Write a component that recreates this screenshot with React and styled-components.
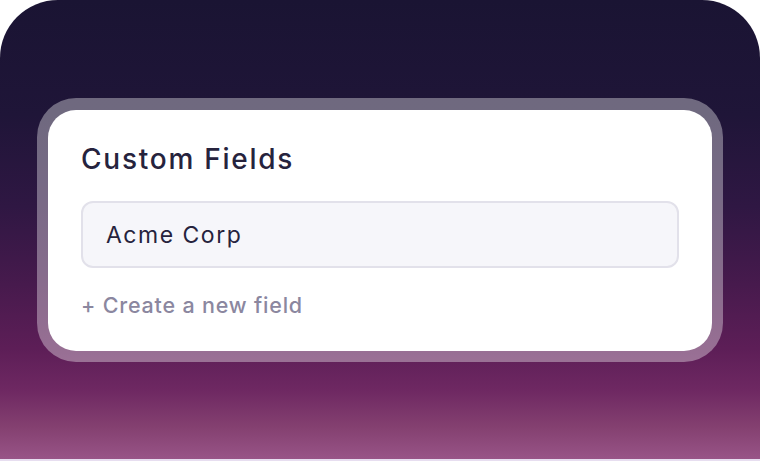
import React from "react";
import styled, { createGlobalStyle } from "styled-components";

const Global = createGlobalStyle`
  html, body { margin: 0; padding: 0; background: #ffffff; }
  body { font-family: "Inter", "Open Sans", sans-serif; }
`;

const Page = styled.div`
  width: 760px;
  height: 461px;
  display: flex;
  flex-direction: column;
  background: #e7def0;
`;

const Stage = styled.div`
  height: 459px;
  background: #ffffff;
`;

const Panel = styled.div`
  height: 100%;
  border-radius: 58px 58px 0 0;
  background: linear-gradient(
    180deg,
    #1a1433 0%,
    #1f1538 25%,
    #2f1743 45%,
    #471a4d 62%,
    #5d1e57 76%,
    #6e2862 85%,
    #844070 93%,
    #985487 100%
  );
  padding: 98px 37px 0 37px;
  box-sizing: border-box;
`;

const Ring = styled.div`
  padding: 12px 11px 11px 11px;
  border-radius: 39px;
  background: rgba(255, 255, 255, 0.36);
`;

const Card = styled.div`
  background: #ffffff;
  border-radius: 28px;
  padding: 31px 33px 32px 33px;
  display: flex;
  flex-direction: column;
`;

const Title = styled.h2`
  margin: 0;
  font-size: 28px;
  font-weight: 500;
  line-height: 36px;
  color: #26233d;
  letter-spacing: 1.75px;
`;

const Field = styled.div`
  margin-top: 24px;
  height: 67px;
  box-sizing: border-box;
  border: 2px solid #e2e1ea;
  border-radius: 12px;
  background: #f6f6fa;
  display: flex;
  align-items: center;
  padding: 0 23px;
  font-size: 23px;
  color: #26233d;
  letter-spacing: 1.5px;
`;

const AddLink = styled.div`
  margin-top: 23px;
  font-size: 21.5px;
  font-weight: 500;
  line-height: 28px;
  color: #8b879f;
  letter-spacing: 0.8px;
`;

export default function App() {
  return (
    <>
      <Global />
      <Page>
        <Stage>
          <Panel>
            <Ring>
              <Card>
                <Title>Custom Fields</Title>
                <Field>Acme Corp</Field>
                <AddLink>+ Create a new field</AddLink>
              </Card>
            </Ring>
          </Panel>
        </Stage>
      </Page>
    </>
  );
}
